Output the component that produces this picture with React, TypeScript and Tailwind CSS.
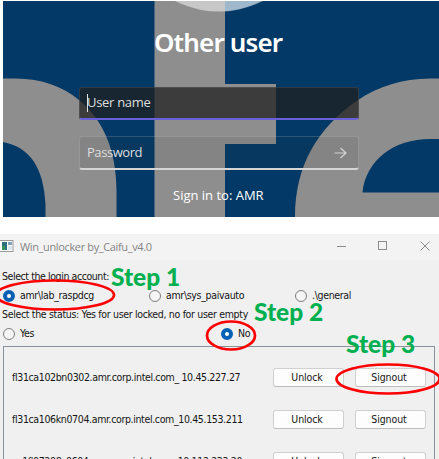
import type { ReactNode } from 'react';

function Wallpaper() {
  return (
    <svg className="absolute inset-0" width="436" height="216" viewBox="3 1 436 216">
      <rect x="3" y="1" width="436" height="216" fill="#033966" />
      <g fill="#8e8e8e">
        <path d="M3 78.5H16C42 79 62 86 79 100C104 121 116 150 116.500 190V217H45.500V205C44 168 30 147 3 142Z" />
        <path d="M154.5 1H225V84H276V144H225V217H154.5Z" />
        <path d="M439 78.5H430C402 79 379 86 358 100C317 128 295 166 295 217H439V192.500H362.500C366 160 394 139 430 139H439Z" />
      </g>
      <circle cx="219" cy="-86" r="97.500" fill="#fff" fillOpacity="0.5" />
      <path d="M225 1V11.200Q246 9 261 1Z" fill="#c4dcea" fillOpacity="0.45" />
    </svg>
  );
}

function LoginScreen() {
  return (
    <div className="relative ml-[3px] h-[216px] w-[436px] overflow-hidden font-['Open_Sans',sans-serif]">
      <Wallpaper />
      <div className="relative flex flex-col items-start pl-[76px] pt-[20px] text-[#dedede]">
        <h1 className="ml-[75px] h-[42px] whitespace-nowrap font-['Noto_Sans'] text-[26px] font-semibold leading-[42px] tracking-[-0.85px] text-white">Other user</h1>
        <div className="mt-[24px] flex h-[33px] w-[280px] items-center rounded-[3px] border border-white/10 border-b-2 border-b-[#6a60da] bg-[#202020]/75 pl-[7px]">
          <span className="h-[18px] w-px bg-[#e0e0e0]" />
          <span className="-ml-px whitespace-nowrap text-[13px] tracking-[-0.3px]">User name</span>
        </div>
        <div className="mt-4 flex h-[34px] w-[280px] items-center justify-between rounded-[3px] border border-white/15 border-b-2 border-b-[#d5d5d5] bg-[#303030]/10 pl-[7px] pr-[11px]">
          <span className="text-[13px] tracking-[-0.45px]">Password</span>
          <svg width="13" height="12" viewBox="0 0 13 12" fill="none" stroke="#d4d4d4" strokeWidth="1.200">
            <path d="M0.500 6H12M6.500 1L12 6L6.500 11" />
          </svg>
        </div>
        <div className="ml-[94px] mt-[15px] whitespace-nowrap text-[13px] leading-[20px] text-white">Sign in to: AMR</div>
      </div>
    </div>
  );
}

function Radio({ checked = false, children }: { checked?: boolean; children: ReactNode }) {
  return (
    <div className="flex h-[13px] items-center gap-[5px]">
      <span className={checked
        ? 'size-3 shrink-0 rounded-full border-[4px] border-[#0560b6] bg-white'
        : 'size-3 shrink-0 rounded-full border border-[#7d7d7d] bg-[#f5f5f5]'} />
      <span className="whitespace-nowrap">{children}</span>
    </div>
  );
}

function Button({ children }: { children: ReactNode }) {
  return (
    <button className="h-[19px] w-[71px] shrink-0 rounded-[3px] border border-[#d0d0d0] border-b-[#bdbdbd] bg-[#fdfdfd] pr-[3px] text-center leading-[17px] tracking-[-0.1px]">{children}</button>
  );
}

const machines = [
  'fl31ca102bn0302.amr.corp.intel.com_ 10.45.227.27',
  'fl31ca106kn0704.amr.corp.intel.com_10.45.153.211',
  'sp1fl07208s0604.amr.corp.intel.com_10.112.233.20',
];

function UnlockerWindow() {
  return (
    <div className="relative mt-[17px] h-[225px] overflow-hidden bg-[#f0f0f0] font-['DejaVu_Sans_Condensed','DejaVu_Sans',sans-serif] text-[10.500px] leading-[13px] tracking-[-0.33px] text-[#151515] [font-stretch:condensed]">
      <div className="flex h-[26px] items-center bg-[#f3f3f3] text-[#858585] [font-stretch:normal]">
        <svg width="14" height="13" viewBox="0 0 14 13" className="-mt-px">
          <rect x="-1" y="0.500" width="14" height="11" fill="#fff" stroke="#999" />
          <rect x="2" y="2" width="5" height="8" fill="#2d6f7f" />
          <rect x="2" y="6" width="3" height="4" fill="#36955b" />
          <rect x="8" y="2" width="4" height="3" fill="#80a2ba" />
          <rect x="8" y="6" width="4" height="4" fill="#dce6ee" />
        </svg>
        <span className="-mt-0.5 ml-[6px] whitespace-nowrap font-['Open_Sans',sans-serif] text-[11px] tracking-[-0.36px]">Win_unlocker by_Caifu_v4.0</span>
        <svg className="-mt-[3px] ml-auto mr-[9px]" width="93" height="11" viewBox="0 0 93 11" fill="none" stroke="#8b8b8b">
          <path d="M0 6.500H9M83.500 1.500L92.500 10.500M92.500 1.500L83.500 10.500" />
          <rect x="41.500" y="1.500" width="8" height="8" />
        </svg>
      </div>
      <div className="ml-[2px] mt-[10px] whitespace-nowrap tracking-[-0.42px]">Select the login account:</div>
      <div className="ml-[3px] mt-[6px] grid grid-cols-[146px_146px_1fr]">
        <Radio checked>amr\lab_raspdcg</Radio>
        <Radio>amr\sys_paivauto</Radio>
        <Radio>.\general</Radio>
      </div>
      <div className="ml-[2px] mt-[6px] whitespace-nowrap">Select the status: Yes for user locked, no for user empty</div>
      <div className="ml-[3px] mt-[6px] grid grid-cols-[218px_1fr]">
        <Radio>Yes</Radio>
        <Radio checked>No</Radio>
      </div>
      <div className="ml-[3px] mt-[6px] h-[130px] w-[432px] border border-[#8b929b] pl-[8px] pr-[9px] pt-[21px]">
        {machines.map((m) => (
          <div key={m} className="mb-[23px] flex h-[19px] items-center">
            <span className="w-[261px] shrink-0 whitespace-nowrap tracking-[-0.36px]">{m}</span>
            <div className="flex gap-[11px]">
              <Button>Unlock</Button>
              <Button>Signout</Button>
            </div>
          </div>
        ))}
      </div>
    </div>
  );
}

function Annotations() {
  return (
    <>
      <svg className="pointer-events-none absolute inset-0" width="439" height="459" fill="none" stroke="#fe0000" strokeWidth="2.700">
        <ellipse cx="55" cy="295" rx="59" ry="14.500" />
        <ellipse cx="231" cy="335.500" rx="24" ry="14" />
        <ellipse cx="388" cy="379" rx="51.500" ry="14.500" />
      </svg>
      <div className="pointer-events-none absolute inset-0 whitespace-nowrap font-['Lato',sans-serif] text-[24.500px] font-black leading-[30px] text-[#00b050]">
        <span className="absolute left-[111px] top-[262px]">Step 1</span>
        <span className="absolute left-[254px] top-[297px]">Step 2</span>
        <span className="absolute left-[346px] top-[329px]">Step 3</span>
      </div>
    </>
  );
}

export default function App() {
  return (
    <div className="relative h-[459px] w-[439px] overflow-hidden bg-white">
      <div className="h-[217px] overflow-hidden pt-px">
        <LoginScreen />
      </div>
      <UnlockerWindow />
      <Annotations />
    </div>
  );
}
